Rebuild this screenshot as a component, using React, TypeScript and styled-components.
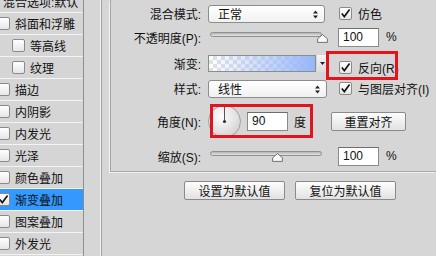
import React from 'react';
import styled, { createGlobalStyle } from 'styled-components';

const GlobalStyle = createGlobalStyle`
  html, body {
    margin: 0;
    padding: 0;
    background: #d6d6d6;
  }
  body {
    font-family: "Liberation Sans", "Noto Sans CJK SC", sans-serif;
    font-size: 12px;
    color: #111;
  }
`;

const Page = styled.div`
  display: flex;
  width: 436px;
  height: 256px;
  overflow: hidden;
  background: #d6d6d6;
`;

const StylesPanel = styled.div`
  width: 83px;
  flex-shrink: 0;
  border-right: 1px solid #8e8e8e;
  overflow: hidden;
`;

const StyleList = styled.ul`
  list-style: none;
  margin: -9px 0 0 0;
  padding: 0;
`;

const StyleRow = styled.li<{ $indent?: boolean; $active?: boolean }>`
  display: flex;
  align-items: center;
  gap: 5px;
  height: 21px;
  border-bottom: 1px solid #f3f3f3;
  padding-left: ${p => (p.$indent ? '12px' : '0')};
  margin-left: ${p => (p.$indent ? '0' : '-3px')};
  background: ${p => (p.$active ? '#3399ff' : '#d5d5d5')};
  white-space: nowrap;
  font-size: 12px;
`;

const Box = styled.span`
  position: relative;
  display: inline-flex;
  align-items: center;
  justify-content: center;
  width: 13px;
  height: 13px;
  box-sizing: border-box;
  flex-shrink: 0;
  border: 1px solid #8a8a8a;
  border-radius: 2px;
  background: linear-gradient(#ffffff, #e6e6e6);
`;

const Gutter = styled.div`
  width: 16px;
  flex-shrink: 0;
  border-right: 1px solid #f2f2f2;
`;

const GutterLine = styled.div`
  width: 1px;
  flex-shrink: 0;
  background: #a2a2a2;
`;

const Content = styled.div`
  flex: 1;
  padding-left: 8px;
  min-width: 0;
`;

const GroupBox = styled.div`
  height: 172px;
  box-sizing: border-box;
  padding-top: 4px;
  border-left: 1px solid #a6a6a6;
  border-bottom: 1px solid #a6a6a6;
  box-shadow: -1px 1px 0 #f2f2f2;
`;

const Row = styled.div<{ $h: number }>`
  display: grid;
  grid-template-columns: 90px 1fr;
  column-gap: 7px;
  align-items: center;
  height: ${p => p.$h}px;
`;

const Label = styled.div`
  text-align: right;
  white-space: nowrap;
`;

const Controls = styled.div<{ $top?: boolean }>`
  position: relative;
  display: flex;
  align-items: center;
  align-self: ${p => (p.$top ? 'start' : 'center')};
  white-space: nowrap;
`;

const Select = styled.div<{ $w: number }>`
  position: relative;
  display: flex;
  align-items: center;
  width: ${p => p.$w}px;
  height: 18px;
  box-sizing: border-box;
  padding-left: 9px;
  border: 1px solid #8c8c8c;
  border-radius: 3px;
  background: linear-gradient(#ffffff, #f1f1f1);
  svg {
    position: absolute;
    right: 5px;
    top: 4px;
  }
`;

const CheckOption = styled.div<{ $gap: number }>`
  display: flex;
  align-items: center;
  gap: 6px;
  margin-left: ${p => p.$gap}px;
`;

const SliderBox = styled.div`
  position: relative;
  width: 119px;
  height: 11px;
`;

const Track = styled.div`
  position: absolute;
  left: 2px;
  top: 0;
  width: 112px;
  height: 5px;
  box-sizing: border-box;
  border: 1px solid #8f8f8f;
  border-radius: 3px;
  background: linear-gradient(#b4b4b4, #e4e4e4);
`;

const Thumb = styled.svg`
  position: absolute;
  top: 2px;
`;

const Field = styled.div<{ $w: number }>`
  display: flex;
  align-items: center;
  width: ${p => p.$w}px;
  height: 19px;
  box-sizing: border-box;
  padding-left: 4px;
  border: 1px solid #8a8a8a;
  border-top-color: #6e6e6e;
  background: #fff;
  font-size: 12px;
`;

const Unit = styled.span<{ $gap: number }>`
  margin-left: ${p => p.$gap}px;
`;

const GradientBar = styled.div`
  width: 108px;
  height: 17px;
  box-sizing: border-box;
  border: 1px solid #8c8c8c;
  background:
    linear-gradient(to right, rgba(150, 182, 250, 0), rgba(150, 182, 250, 1)),
    conic-gradient(#e2e2e2 25%, #ffffff 0 50%, #e2e2e2 0 75%, #ffffff 0) 0 0 / 8px 8px;
`;

const ArrowButton = styled.div`
  display: flex;
  align-items: center;
  justify-content: center;
  width: 10px;
  height: 17px;
  margin-left: 1px;
  background: linear-gradient(#f4f4f4, #dcdcdc);
`;

const Highlight = styled.div<{ $l: number; $t: number; $w: number; $h: number }>`
  position: absolute;
  left: ${p => p.$l}px;
  top: ${p => p.$t}px;
  width: ${p => p.$w}px;
  height: ${p => p.$h}px;
  box-sizing: border-box;
  border: 3px solid #e3141c;
  pointer-events: none;
`;

const AngleGroup = styled.div`
  position: relative;
  display: flex;
  align-items: center;
  margin-left: -1px;
`;

const Button = styled.div<{ $w: number }>`
  display: flex;
  align-items: center;
  justify-content: center;
  width: ${p => p.$w}px;
  height: 19px;
  box-sizing: border-box;
  border: 1px solid #8a8a8a;
  border-radius: 2px;
  background: linear-gradient(#fdfdfd, #e2e2e2);
  font-size: 12px;
  white-space: nowrap;
`;

const ButtonBar = styled.div`
  display: flex;
  gap: 10px;
  margin-top: 9px;
  padding-left: 74px;
`;

const Check = () => (
  <svg width="11" height="11" viewBox="0 0 11 11">
    <path d="M1.8 5.6 L4.3 8.6 L9.6 1.6" fill="none" stroke="#111" strokeWidth="1.6" />
  </svg>
);

const CheckBox = ({ checked }: { checked?: boolean }) => <Box>{checked && <Check />}</Box>;

const UpDown = () => (
  <svg width="7" height="9" viewBox="0 0 7 9">
    <path d="M3.5 0.5 L6 3.5 L1 3.5 Z M3.5 8.5 L6 5.5 L1 5.5 Z" fill="#222" />
  </svg>
);

const Slider = ({ value }: { value: number }) => (
  <SliderBox>
    <Track />
    <Thumb width="11" height="9" viewBox="0 0 11 9" style={{ left: 2 + value * 112 - 5.5 }}>
      <path d="M5.5 0.6 L10.4 4.8 L10.4 8.4 L0.6 8.4 L0.6 4.8 Z" fill="#fafafa" stroke="#707070" />
    </Thumb>
  </SliderBox>
);

const Dial = () => (
  <svg width="35" height="35" viewBox="0 0 35 35">
    <defs>
      <radialGradient id="dialFill" cx="40%" cy="35%" r="70%">
        <stop offset="0" stopColor="#ffffff" />
        <stop offset="1" stopColor="#d2d2d2" />
      </radialGradient>
    </defs>
    <circle cx="17.5" cy="17.5" r="16" fill="url(#dialFill)" stroke="#a0a0a0" />
    <line x1="17.5" y1="17.5" x2="17.5" y2="2" stroke="#555" strokeWidth="1" />
    <circle cx="17.5" cy="17.5" r="1.6" fill="#333" />
  </svg>
);

const STYLES = [
  { name: '混合选项:默认', plain: true },
  { name: '斜面和浮雕' },
  { name: '等高线', indent: true },
  { name: '纹理', indent: true },
  { name: '描边' },
  { name: '内阴影' },
  { name: '内发光' },
  { name: '光泽' },
  { name: '颜色叠加' },
  { name: '渐变叠加', checked: true, active: true },
  { name: '图案叠加' },
  { name: '外发光' },
];

const App = () => {
  return (
    <Page>
      <GlobalStyle />
      <StylesPanel>
        <StyleList>
          {STYLES.map(s => (
            <StyleRow key={s.name} $indent={s.indent} $active={s.active}>
              {!s.plain && <CheckBox checked={s.checked} />}
              <span style={s.plain ? { paddingLeft: 6 } : undefined}>{s.name}</span>
            </StyleRow>
          ))}
        </StyleList>
      </StylesPanel>
      <Gutter />
      <GutterLine />
      <Content>
        <GroupBox>
          <Row $h={19}>
            <Label>混合模式:</Label>
            <Controls>
              <Select $w={117}>
                正常
                <UpDown />
              </Select>
              <CheckOption $gap={14}>
                <CheckBox checked />
                仿色
              </CheckOption>
            </Controls>
          </Row>
          <Row $h={28}>
            <Label>不透明度(P):</Label>
            <Controls>
              <Slider value={1} />
              <Field $w={41} style={{ marginLeft: 11 }}>100</Field>
              <Unit $gap={7}>%</Unit>
            </Controls>
          </Row>
          <Row $h={25}>
            <Label>渐变:</Label>
            <Controls $top>
              <GradientBar />
              <ArrowButton>
                <svg width="5" height="3" viewBox="0 0 5 3">
                  <path d="M0 0 L5 0 L2.5 3 Z" fill="#222" />
                </svg>
              </ArrowButton>
              <CheckOption $gap={12} style={{ marginTop: 8 }}>
                <CheckBox checked />
                反向(R)
              </CheckOption>
              <Highlight $l={118} $t={0} $w={72} $h={29} />
            </Controls>
          </Row>
          <Row $h={25}>
            <Label>样式:</Label>
            <Controls>
              <Select $w={119}>
                线性
                <UpDown />
              </Select>
              <CheckOption $gap={12}>
                <CheckBox checked />
                与图层对齐(I)
              </CheckOption>
            </Controls>
          </Row>
          <Row $h={40}>
            <Label>角度(N):</Label>
            <Controls>
              <AngleGroup>
                <Dial />
                <Field $w={41} style={{ marginLeft: 5 }}>90</Field>
                <Unit $gap={6}>度</Unit>
                <Highlight $l={3} $t={0} $w={103} $h={34} />
              </AngleGroup>
              <Button $w={75} style={{ marginLeft: 25 }}>重置对齐</Button>
            </Controls>
          </Row>
          <Row $h={30}>
            <Label>缩放(S):</Label>
            <Controls>
              <Slider value={0.607} />
              <Field $w={41} style={{ marginLeft: 11 }}>100</Field>
              <Unit $gap={7}>%</Unit>
            </Controls>
          </Row>
        </GroupBox>
        <ButtonBar>
          <Button $w={101}>设置为默认值</Button>
          <Button $w={101}>复位为默认值</Button>
        </ButtonBar>
      </Content>
    </Page>
  );
};

export default App;
